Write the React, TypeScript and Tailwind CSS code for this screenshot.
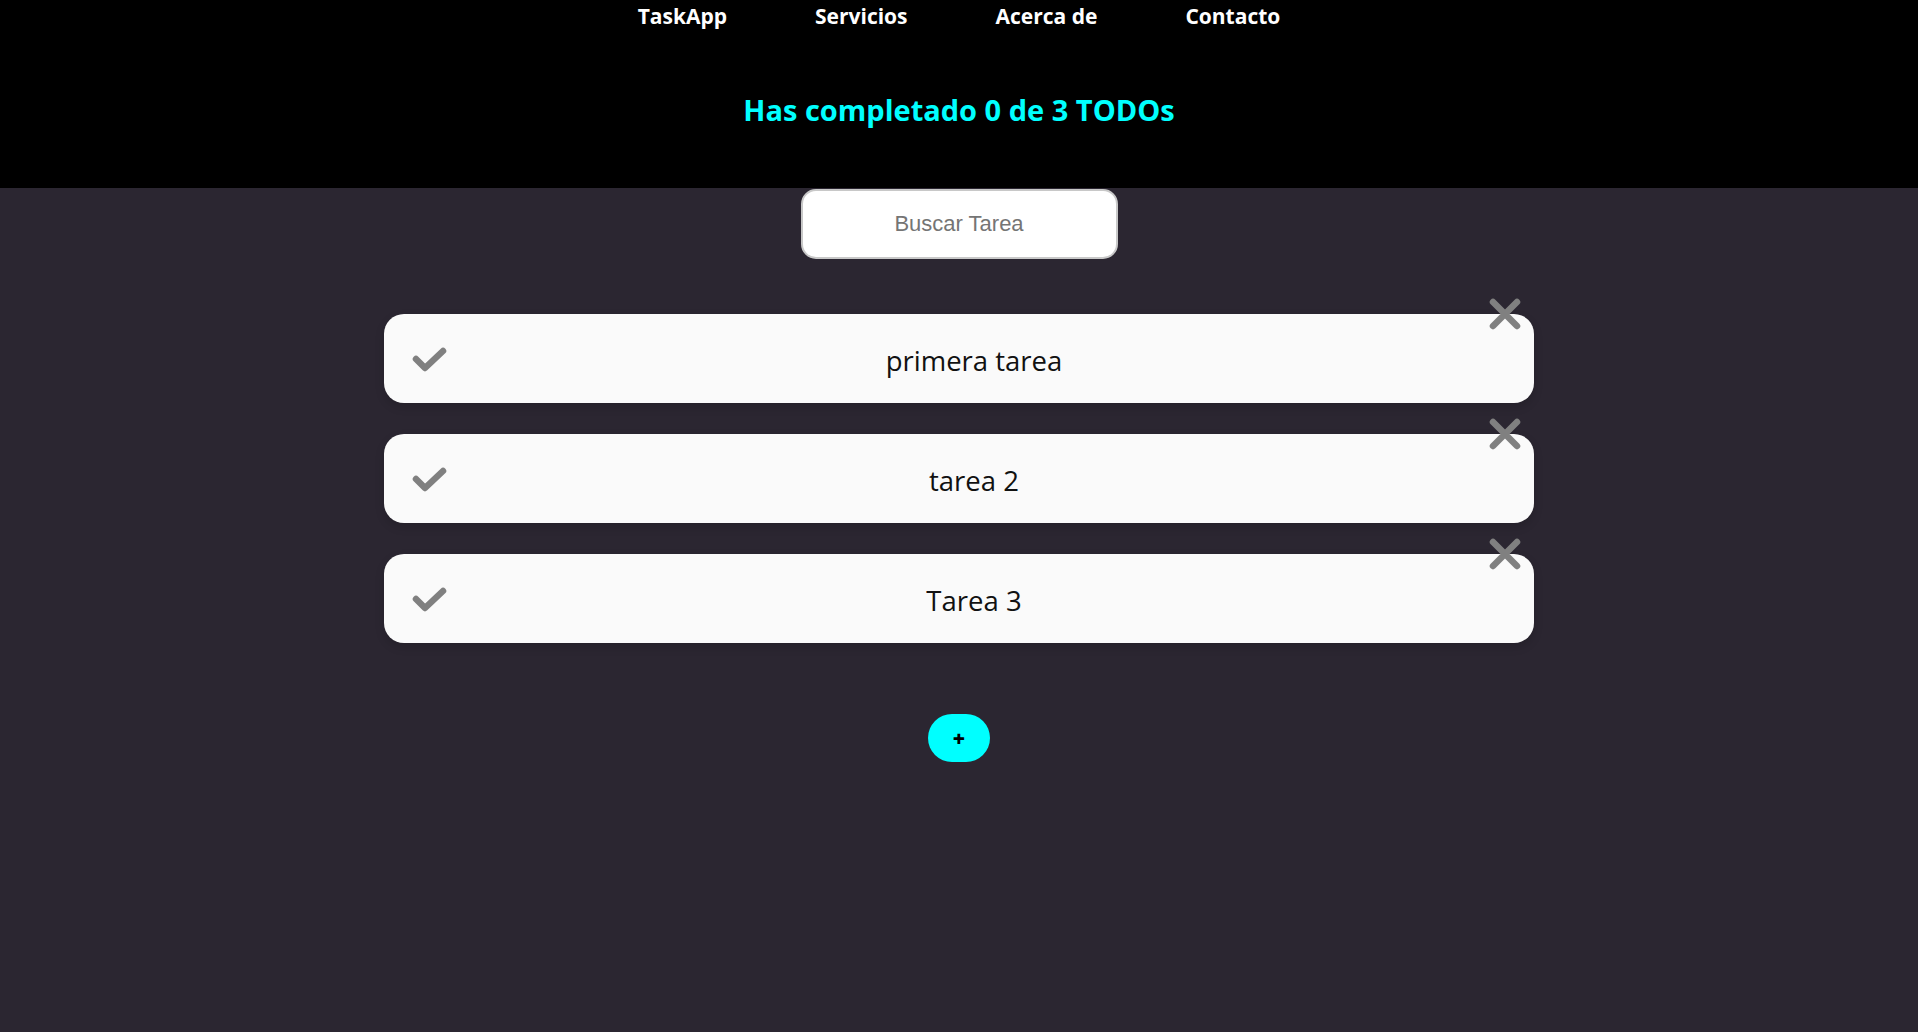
import { useState } from "react";

// Todo list screen: black header with nav + counter, search box, task cards, add button.

const initialTodos = [
  { id: 1, text: "primera tarea", completed: false },
  { id: 2, text: "tarea 2", completed: false },
  { id: 3, text: "Tarea 3", completed: false },
];

function CheckIcon() {
  return (
    <svg width="36" height="28" viewBox="0 0 36 28" fill="none" aria-hidden>
      <polyline
        points="4,13 13,22 31,5"
        stroke="#808080"
        strokeWidth="6.5"
        strokeLinecap="round"
        strokeLinejoin="round"
      />
    </svg>
  );
}

function DeleteIcon() {
  return (
    <svg width="32" height="32" viewBox="0 0 32 32" fill="none" aria-hidden>
      <path d="M4 4 L28 28 M28 4 L4 28" stroke="#808080" strokeWidth="6.5" strokeLinecap="round" />
    </svg>
  );
}

export default function App() {
  const [todos] = useState(initialTodos);
  const [search, setSearch] = useState("");
  const completed = todos.filter((t) => t.completed).length;

  const shown = todos.filter((t) => t.text.toLowerCase().includes(search.toLowerCase()));

  return (
    <div className="min-h-[1032px] bg-[#2b2631] font-['Open_Sans',sans-serif]">
      <header className="flex h-[188px] flex-col items-center bg-black">
        <nav className="flex gap-[88px] text-[21px] font-bold leading-8 text-white">
          <a>TaskApp</a>
          <a>Servicios</a>
          <a>Acerca de</a>
          <a>Contacto</a>
        </nav>
        <h1 className="mt-[58px] text-[29px] font-bold leading-[40px] text-[#00ffff]">
          Has completado {completed} de {todos.length} TODOs
        </h1>
      </header>

      <main className="flex flex-col items-center">
        <input
          value={search}
          onChange={(e) => setSearch(e.target.value)}
          placeholder="Buscar Tarea"
          className="mt-px h-[70px] w-[317px] rounded-[15px] border-2 border-[#c8c8c8] bg-white text-center font-['Liberation_Sans',sans-serif] text-[22px] text-[#333] placeholder:text-[#757575] focus:outline-none"
        />

        <ul className="mt-[55px] flex w-[60%] flex-col gap-[31px]">
          {shown.map((todo) => (
            <li
              key={todo.id}
              className="relative flex h-[89px] items-center rounded-[20px] bg-[#fafafa] shadow-[0_4px_10px_rgba(0,0,0,0.15)]"
            >
              <span className="absolute left-[28px] top-[32px] flex">
                <CheckIcon />
              </span>
              <p className="w-full pl-[30px] pt-[4px] text-center text-[27.5px] text-[#111]">{todo.text}</p>
              <span className="absolute -top-[16px] right-[13px] flex">
                <DeleteIcon />
              </span>
            </li>
          ))}
        </ul>

        <button
          type="button"
          className="mt-[71px] flex h-[48px] w-[62px] items-center justify-center rounded-full bg-[#00ffff] text-[21px] font-extrabold leading-none text-black"
        >
          +
        </button>
      </main>
    </div>
  );
}
